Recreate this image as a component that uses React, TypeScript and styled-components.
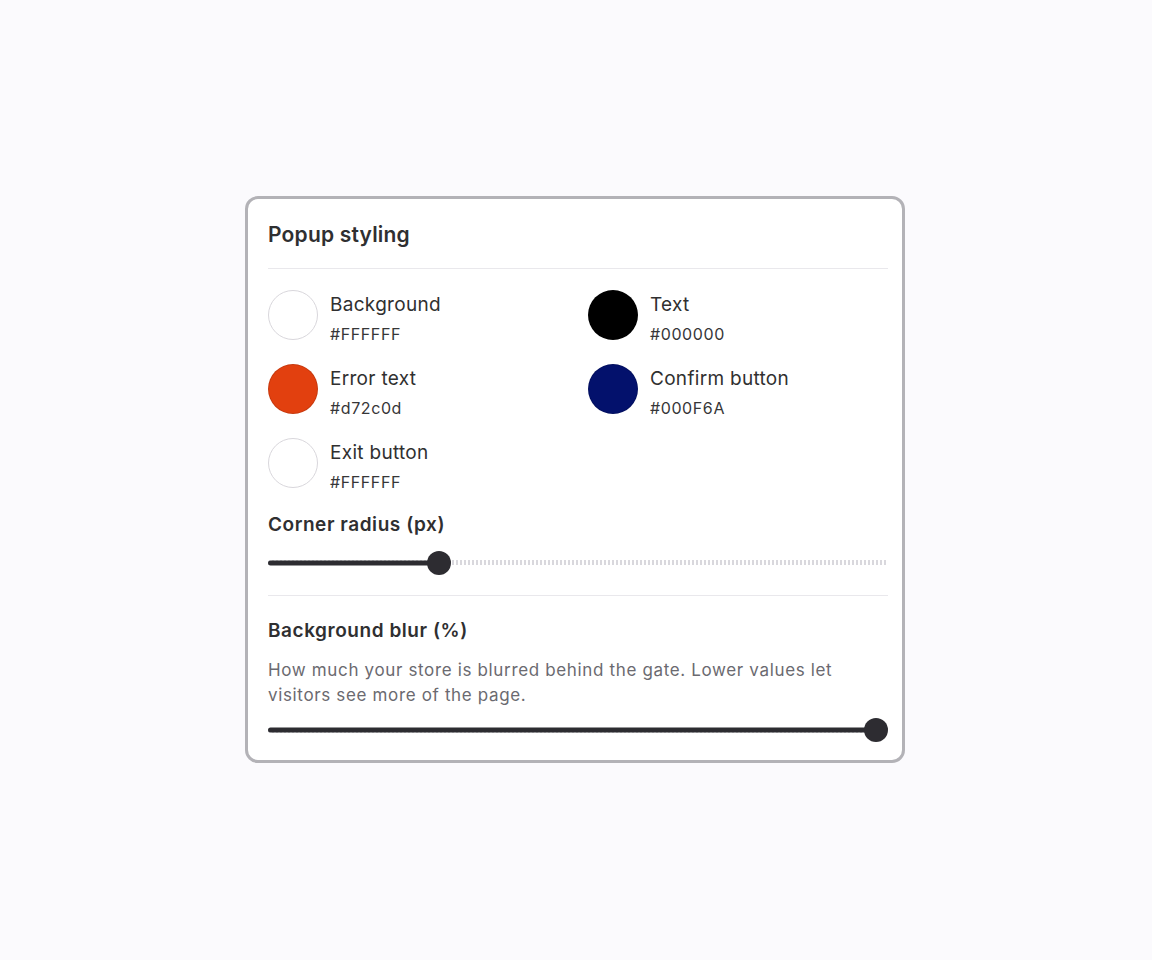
import styled, { createGlobalStyle } from "styled-components";

const Global = createGlobalStyle`
  html, body {
    margin: 0;
    background: #fbfafd;
    font-family: Inter, "Noto Sans", "Liberation Sans", sans-serif;
    color: #303030;
  }
`;

const Page = styled.div`
  min-height: 960px;
  display: flex;
  padding: 196px 0 0 245px;
  box-sizing: border-box;
`;

const Card = styled.section`
  width: 660px;
  height: 567px;
  box-sizing: border-box;
  background: #ffffff;
  border: 3px solid #b3b2b7;
  border-radius: 13px;
  padding: 24px 14px 18px 20px;
  display: flex;
  flex-direction: column;
`;

const Title = styled.h2`
  margin: 0;
  font-size: 21px;
  line-height: 24px;
  font-weight: 600;
  letter-spacing: 0.2px;
  color: #2f2f31;
`;

const Divider = styled.hr<{ $top: number; $bottom: number }>`
  border: none;
  height: 1px;
  background: #e9e8ec;
  margin: ${(p) => p.$top}px 0 ${(p) => p.$bottom}px;
`;

const SwatchGrid = styled.div`
  display: grid;
  grid-template-columns: 300px 300px;
  column-gap: 20px;
  row-gap: 24px;
`;

const Swatch = styled.div`
  display: flex;
  gap: 12px;
  align-items: flex-start;
  height: 50px;
`;

const Circle = styled.div<{ $color: string; $light?: boolean }>`
  width: 50px;
  height: 50px;
  border-radius: 50%;
  box-sizing: border-box;
  background: ${(p) => p.$color};
  border: 1.5px solid ${(p) => (p.$light ? "#d9d7dc" : "rgba(0,0,0,0.12)")};
  flex-shrink: 0;
`;

const SwatchText = styled.div`
  display: flex;
  flex-direction: column;
  gap: 9px;
  padding-top: 5px;
`;

const SwatchLabel = styled.span`
  font-size: 19px;
  line-height: 20px;
  letter-spacing: 0.3px;
  color: #303030;
`;

const SwatchHex = styled.span`
  font-size: 16px;
  line-height: 20px;
  color: #363638;
  letter-spacing: 0.6px;
`;

const Heading = styled.h3<{ $top?: number }>`
  margin: ${(p) => p.$top ?? 0}px 0 0;
  font-size: 19px;
  line-height: 22px;
  font-weight: 600;
  letter-spacing: 0.55px;
  color: #2f2f31;
`;

const Description = styled.p`
  margin: 16px 0 0;
  max-width: 600px;
  font-size: 17px;
  line-height: 25px;
  letter-spacing: 0.65px;
  color: #6b6a70;
`;

const SliderWrap = styled.div<{ $top: number }>`
  position: relative;
  height: 24px;
  margin-top: ${(p) => p.$top}px;
  display: flex;
  align-items: center;
`;

const Rail = styled.div`
  width: 100%;
  height: 5px;
  border-radius: 3px;
  background: repeating-linear-gradient(
    to right,
    #d9d8dd 0,
    #d9d8dd 2px,
    transparent 2px,
    transparent 4px
  );
`;

const Fill = styled.div`
  position: absolute;
  left: 0;
  top: 50%;
  height: 5px;
  transform: translateY(-50%);
  border-radius: 3px;
  background: #2d2c31;
`;

const Thumb = styled.div`
  position: absolute;
  top: 0;
  width: 24px;
  height: 24px;
  border-radius: 50%;
  background: #2d2c31;
  transform: translateX(-50%);
`;

const swatches = [
  { label: "Background", hex: "#FFFFFF", color: "#ffffff", light: true },
  { label: "Text", hex: "#000000", color: "#000000" },
  { label: "Error text", hex: "#d72c0d", color: "#e2400f" },
  { label: "Confirm button", hex: "#000F6A", color: "#03116c" },
  { label: "Exit button", hex: "#FFFFFF", color: "#ffffff", light: true },
];

const TRACK = 620;
const THUMB = 24;

function Slider({ value, top }: { value: number; top: number }) {
  const center = THUMB / 2 + (TRACK - THUMB) * value;
  return (
    <SliderWrap $top={top}>
      <Rail />
      <Fill style={{ width: center }} />
      <Thumb style={{ left: center }} />
    </SliderWrap>
  );
}

export default function App() {
  return (
    <>
      <Global />
      <Page>
        <Card>
          <Title>Popup styling</Title>
          <Divider $top={21} $bottom={21} />
          <SwatchGrid>
            {swatches.map((s) => (
              <Swatch key={s.label}>
                <Circle $color={s.color} $light={s.light} />
                <SwatchText>
                  <SwatchLabel>{s.label}</SwatchLabel>
                  <SwatchHex>{s.hex}</SwatchHex>
                </SwatchText>
              </Swatch>
            ))}
          </SwatchGrid>
          <Heading $top={26}>Corner radius (px)</Heading>
          <Slider value={0.267} top={15} />
          <Divider $top={20} $bottom={25} />
          <Heading>Background blur (%)</Heading>
          <Description>
            How much your store is blurred behind the gate. Lower values let
            visitors see more of the page.
          </Description>
          <Slider value={1} top={10} />
        </Card>
      </Page>
    </>
  );
}
